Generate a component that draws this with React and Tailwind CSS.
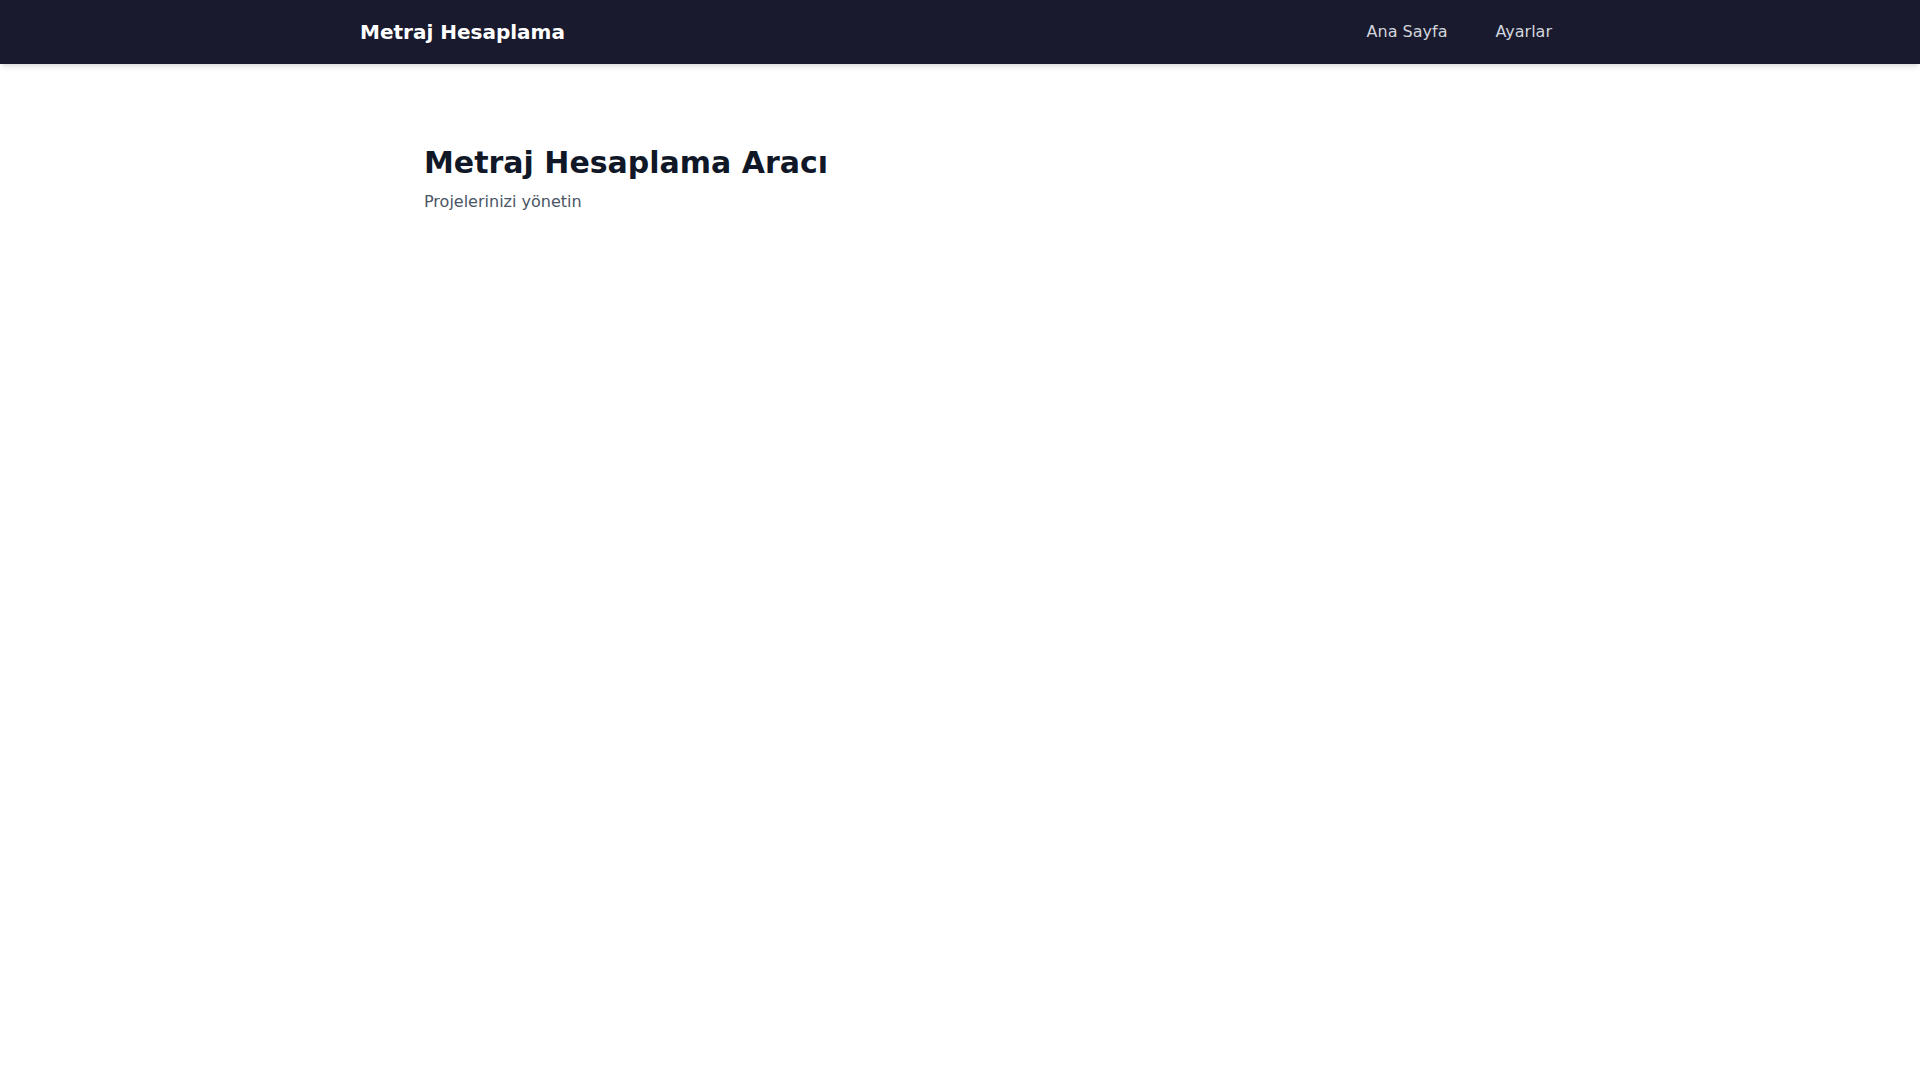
export default function App() {
  return (
    <div className="min-h-screen bg-white" style={{ fontFamily: '"DejaVu Sans", sans-serif' }}>
      <nav className="bg-[#1a1a2e] shadow-md">
        <div className="mx-auto flex h-16 max-w-[1200px] items-center justify-between">
          <span className="text-xl font-bold text-white">Metraj Hesaplama</span>
          <div className="flex items-center gap-8">
            <a className="px-2 text-base text-gray-300">Ana Sayfa</a>
            <a className="px-2 text-base text-gray-300">Ayarlar</a>
          </div>
        </div>
      </nav>
      <main className="mx-auto max-w-[1200px] px-16 pt-[81px]">
        <h1 className="text-3xl font-bold text-gray-900">Metraj Hesaplama Aracı</h1>
        <p className="mt-[9px] text-base text-gray-600">Projelerinizi yönetin</p>
      </main>
    </div>
  );
}
